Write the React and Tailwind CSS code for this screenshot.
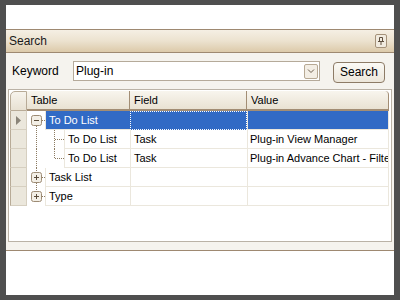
import React from 'react';

const font = { fontFamily: '"Liberation Sans", Arial, sans-serif' };

const rows = [
  { level: 0, table: 'To Do List', field: '', value: '', expander: 'minus', selected: true },
  { level: 1, table: 'To Do List', field: 'Task', value: 'Plug-in View Manager', child: 'mid' },
  { level: 1, table: 'To Do List', field: 'Task', value: 'Plug-in Advance Chart - Filter', child: 'last' },
  { level: 0, table: 'Task List', field: '', value: '', expander: 'plus' },
  { level: 0, table: 'Type', field: '', value: '', expander: 'plus', last: true },
];

function TreeLines({ row, index }) {
  const dot = { stroke: '#8c7b62', strokeWidth: 1, strokeDasharray: '1 1', fill: 'none' };
  return (
    <svg width="37" height="19" className="absolute left-0 top-0">
      {/* vertical trunk */}
      {index === 0 && <line x1="9.5" y1="15" x2="9.5" y2="19" style={dot} />}
      {(index === 1 || index === 2) && <line x1="9.5" y1="0" x2="9.5" y2="19" style={dot} />}
      {index === 3 && <line x1="9.5" y1="0" x2="9.5" y2="4" style={dot} />}
      {index === 3 && <line x1="9.5" y1="15" x2="9.5" y2="19" style={dot} />}
      {index === 4 && <line x1="9.5" y1="0" x2="9.5" y2="4" style={dot} />}
      {row.expander && <line x1="15" y1="9.5" x2="18" y2="9.5" style={dot} />}
      {row.child === 'mid' && <line x1="27.5" y1="0" x2="27.5" y2="19" style={dot} />}
      {row.child === 'last' && <line x1="27.5" y1="0" x2="27.5" y2="9.5" style={dot} />}
      {row.child && <line x1="28" y1="9.5" x2="37" y2="9.5" style={dot} />}
      {row.expander && (
        <g>
          <rect x="4.5" y="4.5" width="10" height="10" rx="2" fill="#f3efe6" stroke="#9d8b74" />
          <line x1="7" y1="9.5" x2="12" y2="9.5" stroke="#5a4b3a" />
          {row.expander === 'plus' && <line x1="9.5" y1="7" x2="9.5" y2="12" stroke="#5a4b3a" />}
        </g>
      )}
    </svg>
  );
}

function GridRow({ row, index }) {
  const indent = row.level === 0 ? 18 : 37;
  return (
    <div className="flex h-[19px]">
      <div className="w-[17px] shrink-0 bg-[#ebe7dc] border-r border-b border-[#d6cfc0] border-l border-l-[#b8ab97] flex items-center justify-center">
        {row.selected && (
          <svg width="5" height="9" viewBox="0 0 5 9">
            <path d="M0 0 L5 4.5 L0 9 Z" fill="#8a8478" />
          </svg>
        )}
      </div>
      <div className="relative w-[103px] shrink-0 bg-white flex">
        <TreeLines row={row} index={index} />
        <div style={{ width: indent }} className="shrink-0" />
        <div
          className={`flex-1 flex items-center pl-[3px] border-b border-l border-[#ebe7dd] whitespace-nowrap overflow-hidden ${
            row.selected ? 'bg-[#316ac5] text-white' : 'text-black'
          }`}
        >
          {row.table}
        </div>
      </div>
      <div
        className={`w-[117px] shrink-0 flex items-center pl-[3px] whitespace-nowrap overflow-hidden ${
          row.selected
            ? 'bg-[#316ac5] border border-dotted border-white'
            : 'bg-white border-l border-b border-[#ebe7dd]'
        }`}
      >
        {row.field}
      </div>
      <div
        className={`w-[142px] shrink-0 flex items-center pl-[2px] border-l border-b border-r border-[#ebe7dd] whitespace-nowrap overflow-hidden ${
          row.selected ? 'bg-[#316ac5]' : 'bg-white'
        }`}
      >
        {row.value}
      </div>
    </div>
  );
}

export default function App() {
  return (
    <div className="w-[400px] h-[300px] bg-[#4f4f4f] pt-[5px] pb-[5px] px-[6px] text-[11px] text-black" style={font}>
      <div className="h-full bg-white flex flex-col">
        <div className="h-[24px] shrink-0" />

        {/* Panel caption */}
        <div className="h-[24px] shrink-0 border-t border-b border-[#9e8971] bg-gradient-to-b from-[#f5efe4] via-[#ece2cf] to-[#dccaaa] flex items-center justify-between pl-[3px] pr-[7px]">
          <span className="text-[12px] text-[#1a1a1a]">Search</span>
          <div className="w-[12px] h-[14px] border border-[#a5927a] rounded-[2px] bg-[#f1ebdf] flex items-center justify-center">
            <svg width="8" height="10" viewBox="0 0 8 10">
              <path d="M2.5 1.5 H5.5 V5.5 M2.5 1.5 V5.5 M1 5.5 H7 M4 5.5 V9" stroke="#5e4f3e" strokeWidth="1" fill="none" />
            </svg>
          </div>
        </div>

        {/* Panel body */}
        <div className="flex-1 bg-[#f5f3ee] border-b border-[#9e8971] flex flex-col pt-[7px] px-[2px] pb-[8px]">
          <div className="flex items-center h-[22px]">
            <span className="w-[65px] pl-[4px] text-[12px]">Keyword</span>
            <div className="w-[247px] h-[20px] bg-white border border-[#b5aa9a] flex items-center">
              <span className="flex-1 pl-[2px] text-[12px]">Plug-in</span>
              <div className="w-[14px] h-[15px] mr-[1px] border border-[#b7a994] rounded-[2px] bg-[#f3eee5] flex items-center justify-center">
                <svg width="8" height="5" viewBox="0 0 8 5">
                  <path d="M1 0.5 L4 3.5 L7 0.5" stroke="#6b5d4c" strokeWidth="1" fill="none" />
                </svg>
              </div>
            </div>
            <div className="ml-[13px] w-[52px] h-[21px] mt-[2px] border border-[#8d7b66] rounded-[4px] bg-gradient-to-b from-[#fbfaf6] to-[#ece6da] flex items-center justify-center text-[12px]">
              Search
            </div>
          </div>

          {/* Grid */}
          <div className="mt-[7px] flex-1 bg-white border border-[#bab2a6] p-[1px]">
            <div className="flex h-[20px]">
              <div className="w-[17px] shrink-0 rounded-tl-[5px] border border-[#b8ab97] bg-gradient-to-b from-[#f7f4ed] to-[#e8e1d2]" />
              <div className="w-[103px] shrink-0 flex items-center pl-[4px] border-b-2 border-r border-[#a28d74] bg-gradient-to-b from-[#f8f5ee] to-[#e9e2d3]">Table</div>
              <div className="w-[117px] shrink-0 flex items-center pl-[4px] border-b-2 border-r border-[#a28d74] bg-gradient-to-b from-[#f8f5ee] to-[#e9e2d3]">Field</div>
              <div className="w-[142px] shrink-0 flex items-center pl-[4px] border-b-2 border-r border-[#a28d74] rounded-tr-[4px] bg-gradient-to-b from-[#f8f5ee] to-[#e9e2d3]">Value</div>
            </div>
            {rows.map((row, i) => (
              <GridRow key={i} row={row} index={i} />
            ))}
          </div>
        </div>

        <div className="h-[44px] shrink-0" />
      </div>
    </div>
  );
}
